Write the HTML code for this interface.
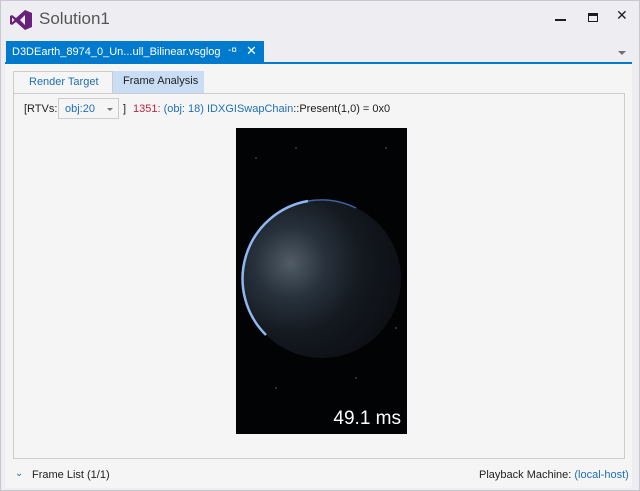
<!DOCTYPE html>
<html><head><style>
*{margin:0;padding:0;box-sizing:border-box}
body{width:640px;height:491px;background:#eeeef2;font-family:"Liberation Sans",sans-serif;font-size:11px;position:relative;overflow:hidden;border:1px solid #c8c8d0}
.a{position:absolute;white-space:nowrap}
</style></head><body>
<svg class="a" style="left:9px;top:9px" width="22" height="20" viewBox="0 0 22 20"><path d="M15 0L22 3V17L15 20L6 12L2 15L0 14V6L2 5L6 8ZM15 5L10 10L15 15Z M2 7.5V12.5L4.5 10Z" fill="#68217a" fill-rule="evenodd"/></svg>
<div class="a" style="left:38px;top:8px;font-size:17px;color:#555">Solution1</div>
<div class="a" style="left:554px;top:18px;width:11px;height:2px;background:#1e1e1e"></div>
<div class="a" style="left:587px;top:12px;width:10px;height:9px;border:1px solid #1e1e1e;border-top:3px solid #1e1e1e"></div>
<div class="a" style="left:615px;top:6px;font-size:14px;color:#1e1e1e">✕</div>
<div class="a" style="left:5px;top:40px;width:258px;height:22px;background:#007acc;color:#fff;padding:5px 0 0 6px;font-size:11px">D3DEarth_8974_0_Un...ull_Bilinear.vsglog<span style="position:absolute;left:222px;top:4px;font-size:10px">-¤</span><span style="position:absolute;left:240px;top:2px;font-size:13px">✕</span></div>
<div class="a" style="left:617px;top:50px;border:4px solid transparent;border-top:4px solid #717171;border-bottom:0"></div>
<div class="a" style="left:4px;top:61px;width:627px;height:2px;background:#007acc"></div>
<div class="a" style="left:4px;top:63px;width:627px;height:424px;background:#f5f5f5"></div>
<div class="a" style="left:12px;top:70px;width:100px;height:23px;background:#f5f5f5;border:1px solid #ccc;border-bottom:none;color:#1e6fb8;padding:4px 0 0 15px">Render Target</div>
<div class="a" style="left:112px;top:70px;width:91px;height:22px;background:#c9def5;color:#1e1e1e;padding:4px 0 0 10px">Frame Analysis</div>
<div class="a" style="left:12px;top:92px;width:612px;height:366px;border:1px solid #ccc"></div>
<div class="a" style="left:23px;top:102px;color:#1e1e1e">[RTVs:</div>
<div class="a" style="left:57px;top:97px;width:61px;height:21px;border:1px solid #ccc;background:#f5f5f5;color:#1e6fb8;padding:4px 0 0 6px">obj:20<span style="position:absolute;left:48px;top:9px;border:3px solid transparent;border-top:3px solid #777"></span></div>
<div class="a" style="left:122px;top:102px;color:#1e1e1e">]</div>
<div class="a" style="left:132px;top:102px;color:#1e1e1e"><span style="color:#c4243c">1351:</span> <span style="color:#1e6fb8">(obj: 18) IDXGISwapChain</span>::Present(1,0) = 0x0</div>
<div class="a" style="left:235px;top:127px;width:171px;height:306px;background:#020304;overflow:hidden">
<svg width="171" height="306"><defs>
<radialGradient id="g" cx="0.3" cy="0.4" r="0.75"><stop offset="0" stop-color="#505c66"/><stop offset="0.3" stop-color="#27313c"/><stop offset="0.6" stop-color="#141920"/><stop offset="1" stop-color="#0c0e12"/></radialGradient></defs>
<circle cx="86" cy="151" r="79" fill="url(#g)"/>
<path d="M72 73 A79 79 0 0 0 30 207" fill="none" stroke="#8fb8f0" stroke-width="2.5"/>
<path d="M72 73 A79 79 0 0 1 120 80" fill="none" stroke="#4a78c0" stroke-width="1.5" opacity=".8"/>
<g fill="#999"><circle cx="20" cy="30" r=".6"/><circle cx="150" cy="20" r=".6"/><circle cx="40" cy="260" r=".6"/><circle cx="120" cy="250" r=".6"/><circle cx="160" cy="200" r=".6"/><circle cx="60" cy="20" r=".6"/></g></svg>
<div class="a" style="right:6px;bottom:4px;color:#fff;font-size:19px">49.1 ms</div></div>
<div class="a" style="left:14px;top:467px;color:#1e6fb8;font-size:10px">⌄</div>
<div class="a" style="left:31px;top:468px;color:#1e1e1e">Frame List (1/1)</div>
<div class="a" style="left:478px;top:468px;color:#1e1e1e">Playback Machine: <span style="color:#1e6fb8">(local-host)</span></div>
</body></html>
